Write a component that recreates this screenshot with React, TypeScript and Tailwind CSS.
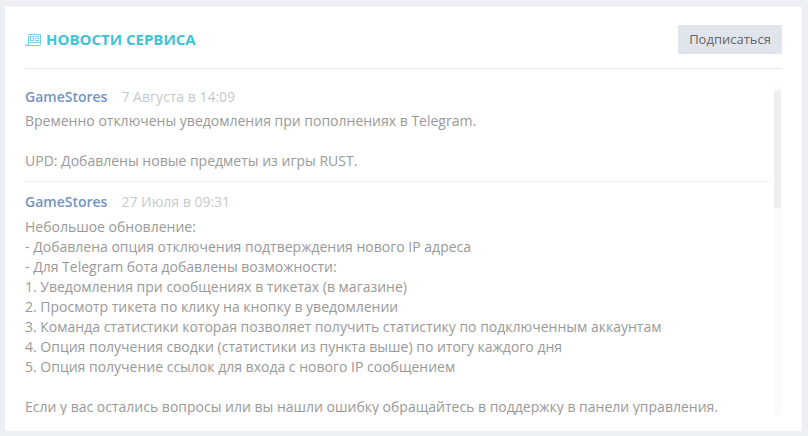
const NEWS = [
  {
    id: 1,
    date: "7 Августа в 14:09",
    lines: ["Временно отключены уведомления при пополнениях в Telegram.", "", "UPD: Добавлены новые предметы из игры RUST."],
  },
  {
    id: 2,
    date: "27 Июля в 09:31",
    lines: [
      "Небольшое обновление:",
      "- Добавлена опция отключения подтверждения нового IP адреса",
      "- Для Telegram бота добавлены возможности:",
      "1. Уведомления при сообщениях в тикетах (в магазине)",
      "2. Просмотр тикета по клику на кнопку в уведомлении",
      "3. Команда статистики которая позволяет получить статистику по подключенным аккаунтам",
      "4. Опция получения сводки (статистики из пункта выше) по итогу каждого дня",
      "5. Опция получение ссылок для входа с нового IP сообщением",
      "",
      "Если у вас остались вопросы или вы нашли ошибку обращайтесь в поддержку в панели управления.",
    ],
  },
];

// newspaper-o, the packaged ones are too heavy at this size
function NewsIcon() {
  return (
    <svg width="16" height="12" viewBox="0 0 16 12" fill="none" stroke="#3dc4d4" strokeOpacity="0.75" className="shrink-0">
      <path d="M2.5 1.5V10a1.5 1.5 0 0 1-3 0" transform="translate(1 0)" />
      <path d="M3.5.5h12v10a1 1 0 0 1-1 1H1.5" />
      <path d="M5.5 2.5h3v4h-3z" />
      <path d="M10 2.5h4M10 4.5h4M10 6.5h4M5 8.5h9" />
    </svg>
  );
}

export default function App() {
  return (
    <div className="h-[436px] w-[808px] overflow-hidden bg-[#ecf0f5] pl-[5px] pt-[7px] font-['Open_Sans',sans-serif]">
      <div className="h-[424px] w-[797px] bg-white px-5 pt-[18px]">
        <div className="flex h-11 items-start justify-between border-b border-[#e9edf3]">
          <h2 className="flex h-[29px] items-center gap-[5px] text-[15px] font-bold uppercase text-[#3dc4d4]">
            <NewsIcon />
            Новости сервиса
          </h2>
          <button className="h-[29px] w-[104px] bg-[#e0e5ec] text-[13px] text-[#666]">Подписаться</button>
        </div>

        <div className="mt-[18px] flex h-[328px] gap-1">
          <div className="w-[745px] shrink-0 overflow-hidden">
            {NEWS.map((item, i) => (
              <div key={item.id} className={i > 0 ? "mt-[10px] border-t border-[#f1f1f1] pt-[10px]" : ""}>
                <div className="flex h-5 items-center gap-[14px]">
                  <span className="text-sm font-semibold text-[#7094c4]">GameStores</span>
                  <span className="text-sm text-[#c5c9cd]">{item.date}</span>
                </div>
                <div className={i > 0 ? "mt-[5px] text-sm leading-5 text-[#999999]" : "mt-1 text-sm leading-5 text-[#999999]"}>
                  {item.lines.map((line, j) => (
                    <p key={j} className="h-5 whitespace-nowrap">
                      {line}
                    </p>
                  ))}
                </div>
              </div>
            ))}
          </div>
          <div className="h-full w-[7px] bg-[#fafafa] pt-1">
            <div className="h-[117px] w-full bg-[#eeeeee]" />
          </div>
        </div>
      </div>
    </div>
  );
}
